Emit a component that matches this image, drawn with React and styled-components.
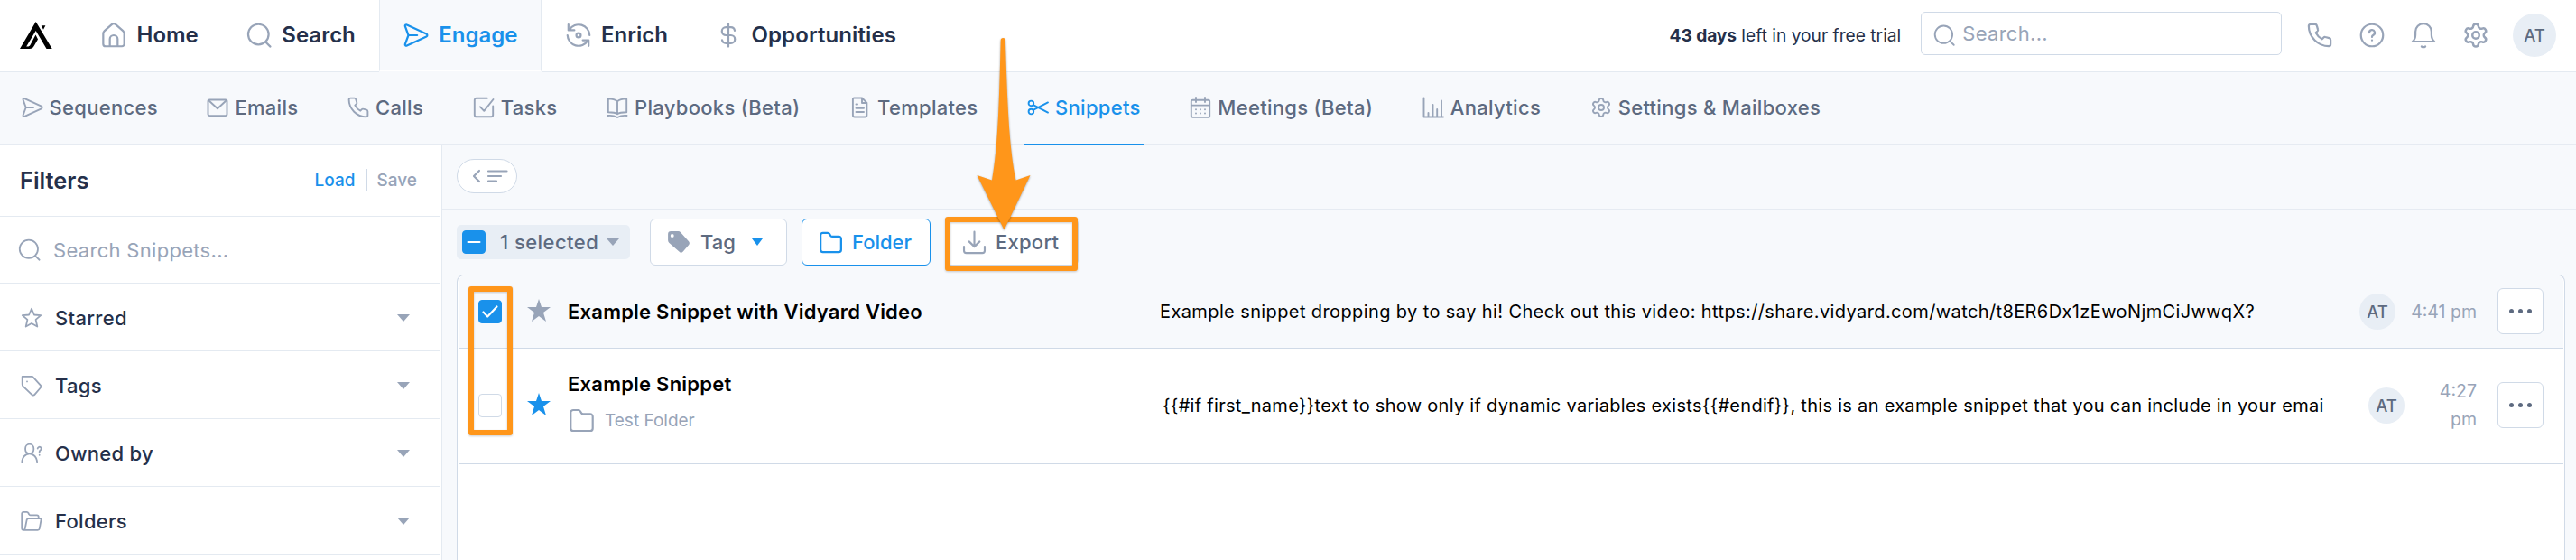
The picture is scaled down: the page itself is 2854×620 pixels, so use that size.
import React from "react";
import styled, { createGlobalStyle } from "styled-components";
import { Settings } from "lucide-react";

const GlobalStyle = createGlobalStyle`
    * {
        box-sizing: border-box;
    }

    body {
        margin: 0;
        background: #f7f9fc;
        font-family: Inter, "Liberation Sans", sans-serif;
        color: #25304a;
    }

    button {
        font-family: inherit;
    }
`

const blue = "#1991eb"
const grey = "#98a4b8"
const slate = "#5d6a80"

const Page = styled.div`
    position: relative;
    width: 100%;
    height: 620px;
    overflow: hidden;
    display: flex;
    flex-direction: column;
`

const IconSvg = styled.svg`
    flex: none;
    display: block;
    fill: none;
    stroke: currentColor;
    stroke-width: ${(p) => p.$stroke || 1.9};
    stroke-linecap: round;
    stroke-linejoin: round;
    overflow: visible;
`

const shapes = {
    home: <path d="M2 10.4c0-.9.4-1.7 1-2.3l7.1-6.3c1.1-.9 2.7-.9 3.8 0L21 8.1c.6.6 1 1.4 1 2.3v9.9a2.2 2.2 0 0 1-2.2 2.2H4.2A2.2 2.2 0 0 1 2 20.3zM8.3 22.5v-6.8a3.7 3.7 0 0 1 7.4 0v6.8" />,
    search: <><circle cx="11.4" cy="11.2" r="9.7" /><path d="m18.4 18.6 4.3 4.2" /></>,
    send: <path d="M3.3 2.1c-1-.5-2.1.4-1.7 1.5L4.7 12l-3.1 8.4c-.4 1.1.7 2 1.7 1.5l18.5-8.6c1.1-.5 1.1-2.1 0-2.6zM4.7 12h8.3" />,
    enrich: <><path d="M2.4 1.9v5.3H8M3.3 6.8A10.4 10.4 0 0 1 22.5 12M21.6 22.1v-5.3H16M20.7 17.2A10.4 10.4 0 0 1 1.5 12" /><circle cx="12" cy="12" r="2.1" /></>,
    dollar: <path d="M12 1.2v21.6M18 7.6a3.7 3.7 0 0 0-3.7-3.2H9.6a3.8 3.8 0 0 0 0 7.6h4.8a3.8 3.8 0 0 1 0 7.6H9.6A3.7 3.7 0 0 1 6 16.6" />,
    mail: <><rect x="1.5" y="3.5" width="21" height="17.6" rx="1.8" /><path d="m2.3 4.3 9.7 9 9.7-9" /></>,
    phone: <path d="M1.6 3.3c0-1 .8-1.7 1.8-1.7h4.2c.8 0 1.5.5 1.7 1.3l1 3.6c.2.6 0 1.2-.4 1.6L8.3 9.6c1.3 2.5 3.4 4.7 6 6.1l1.5-1.6c.4-.4 1-.6 1.6-.4l3.7 1c.8.2 1.3.9 1.3 1.7v4.2c0 1-.8 1.8-1.8 1.8C10.4 22.4 1.6 13.6 1.6 3.3z" />,
    tasks: <path d="M22.2 10.5v9.8a2 2 0 0 1-2 2H3.8a2 2 0 0 1-2-2V3.8a2 2 0 0 1 2-2h12M8 11.3l4.3 4.5L22.5 3" />,
    book: <path d="M12 5.2C9.8 3.2 6.5 2.4 1.8 2.4v14.8c4.5 0 8 .3 10.2 2.1 2.2-1.8 5.7-2.1 10.2-2.1V2.4C17.5 2.4 14.2 3.2 12 5.2zv13.5M1.5 21c4-.5 7.5.3 10.5 2 3-1.7 6.5-2.5 10.5-2" />,
    doc: <path d="M5.2 1.5h8.9l5.3 5.4v13.6a2 2 0 0 1-2 2H5.9a2 2 0 0 1-2-2V2.8c0-.8.5-1.3 1.3-1.3zM14 2v5h5M7.5 8.5H9M7.5 12.7h8.5M7.5 17h8.5" />,
    snip: <><circle cx="4.4" cy="7.4" r="2.8" /><circle cx="4.4" cy="16.6" r="2.8" /><path d="M6.7 9.1 23 17.6M6.7 14.9 23 6.4" /></>,
    calendar: <path d="M3.5 3.7h17A1.7 1.7 0 0 1 22.2 5.4v15.8a1.7 1.7 0 0 1-1.7 1.7h-17a1.7 1.7 0 0 1-1.7-1.7V5.4a1.7 1.7 0 0 1 1.7-1.7zM1.8 9.6h20.4M7 1v5M17 1v5M7 14.2h.01M12 14.2h.01M17 14.2h.01M7 18.5h.01M12 18.5h.01M17 18.5h.01" />,
    chart: <path d="M1.5 1.5v21h21.5M6.5 22v-4M11.5 22V9M16.2 22v-8M21 22V4.5" />,
    help: <><circle cx="12" cy="12" r="10.5" /><path d="M9.4 9.6a2.6 2.6 0 1 1 3.9 2.2c-.8.5-1.3.9-1.3 1.7v.2M12 16.8v.1" /></>,
    bell: <path d="M1.6 18h20.8c-1.9-1.5-2.8-3.4-2.8-6.7V8.6a7.6 7.6 0 0 0-15.2 0v2.7c0 3.3-.9 5.2-2.8 6.7zM10.2 22.7q1.8 1.3 3.6 0" />,
    star: <path d="m12 1.8 2.9 6.7 7.3.6-5.6 4.8 1.7 7.6-6.3-3.5-6.3 3.5 1.7-7.6L1.8 9.1l7.3-.6z" />,
    tag: <><path d="M1.7 1.9H12c.8 0 1.5.3 2 .9l7.7 8.5c.8.9.8 2.3 0 3.2l-6.3 7.3c-.9 1-2.3 1-3.2.1L2.5 12.6a3 3 0 0 1-.8-2z" /><path d="M7 7.4h.01" /></>,
    owner: <path d="M9.7 12.3a4.6 4.6 0 0 0 4.6-4.7V6.3a4.6 4.6 0 0 0-9.2 0v1.3a4.6 4.6 0 0 0 4.6 4.7zM1.3 22.2c0-5.5 3.7-9.9 8.4-9.9s8.4 4.4 8.4 9.9M18.7 6.5a2 2 0 1 1 3 2c-.7.5-1 .9-1 1.6v.6M20.7 13.7v.1" />,
    folder: <path d="M1.9 4.8a2.3 2.3 0 0 1 2.3-2.3h4.6c.9 0 1.6.5 2 1.2l.7 1.3c.3.7 1 1.1 1.8 1.1h6.5a2.3 2.3 0 0 1 2.3 2.3v10.8a2.3 2.3 0 0 1-2.3 2.3H4.2a2.3 2.3 0 0 1-2.3-2.3z" />,
    folderOpen: <path d="M4 21.8h14.8c1 0 1.8-.7 2-1.7l1.7-9.4c.1-.8-.5-1.5-1.3-1.5H8.6c-1 0-1.8.7-2 1.6L4.8 20c-.3 1.1-.9 1.8-1.7 1.8A1.9 1.9 0 0 1 1.2 20V3.8c0-1.1.8-1.9 1.9-1.9h3.5c.8 0 1.5.4 1.8 1.1l.7 1.4c.3.6.8.9 1.5.9h7.3c1 0 1.8.8 1.8 1.8v2.1" />,
    download: <path d="M1.8 16v4a2.3 2.3 0 0 0 2.3 2.3h15.8a2.3 2.3 0 0 0 2.3-2.3v-4M12 1.5v14.2M6.8 11l5.2 5.1 5.2-5.1" />,
}

const Icon = ({ name, size, stroke }) => (
    <IconSvg viewBox="0 0 24 24" width={size} height={size} $stroke={stroke}>
        {shapes[name]}
    </IconSvg>
)

/* ---------- top bar ---------- */

const TopBar = styled.header`
    flex: none;
    height: 80px;
    display: flex;
    align-items: center;
    background: #fff;
    border-bottom: 1px solid #e4eaf1;
    padding: 0 22px 1px;
`

const Logo = styled.svg`
    flex: none;
    width: 36px;
    height: 30px;
    margin-right: 27px;
`

const NavItem = styled.a`
    align-self: flex-start;
    height: 79px;
    display: flex;
    align-items: center;
    gap: 11.5px;
    padding: 0 25px 0 26px;
    border: 1px solid transparent;
    border-width: 0 1px 1px;
    font-size: 24px;
    font-weight: 600;
    line-height: 28px;
    letter-spacing: ${(p) => p.$spacing || "0"};

    svg {
        color: ${grey};
    }

    ${(p) => p.$active && `
        background: #f7f9fc;
        border-color: #e4eaf1;
        border-bottom-color: #fff;
        box-shadow: 0 1px 0 #f7f9fc;
        color: ${blue};
        svg { color: ${blue}; }
    `}
`

const Trial = styled.div`
    margin-left: auto;
    margin-right: 22px;
    font-size: 19.2px;
    white-space: pre;
    b {
        font-weight: 700;
        letter-spacing: -0.1px;
    }
`

const GlobalSearch = styled.div`
    align-self: flex-start;
    margin-top: 13px;
    width: 400px;
    height: 48px;
    border: 1px solid #d0dae7;
    border-radius: 5px;
    display: flex;
    align-items: center;
    gap: 8px;
    padding-left: 13px;
    color: ${grey};
    font-size: 22px;
    letter-spacing: 0.3px;

    svg {
        margin-top: 4px;
    }
`

const HeaderIcons = styled.div`
    display: flex;
    align-items: center;
    gap: 29.6px;
    margin: 0 26px 0 28px;
    color: ${grey};

    svg:last-child {
        margin-left: -1px;
    }
`

const Avatar = styled.div`
    flex: none;
    width: ${(p) => p.$size}px;
    height: ${(p) => p.$size}px;
    border-radius: 50%;
    background: #e8eef5;
    color: ${slate};
    display: flex;
    align-items: center;
    justify-content: center;
    font-size: 18.5px;
    font-weight: 500;
`

/* ---------- second bar ---------- */

const SubNav = styled.nav`
    flex: none;
    height: 80px;
    display: flex;
    gap: 46.6px;
    padding-left: 19.5px;
    border-bottom: 1px solid #e6ebf2;
`

const SubItem = styled.a`
    height: 80px;
    display: flex;
    align-items: center;
    gap: 7px;
    padding: 0 4px 1px;
    border-bottom: 1px solid ${(p) => (p.$active ? blue : "transparent")};
    color: ${(p) => (p.$active ? blue : slate)};
    font-size: 22px;
    font-weight: 500;
    letter-spacing: 0.3px;
    white-space: nowrap;

    svg {
        color: ${(p) => (p.$active ? blue : grey)};
    }
`

/* ---------- sidebar ---------- */

const Body = styled.div`
    flex: 1;
    display: flex;
    min-height: 0;
`

const Sidebar = styled.aside`
    flex: none;
    width: 490px;
    background: #fff;
    border-right: 1px solid #e4eaf1;
    padding-right: 1px;
`

const SideRow = styled.div`
    height: 75px;
    display: flex;
    align-items: center;
    border-bottom: 1px solid #e4eaf1;
    padding: 1px 34px 0 23px;
    font-size: 22px;
    font-weight: 500;
    letter-spacing: 0.3px;

    svg {
        color: ${grey};
        margin-right: 14px;
    }
`

const SideHeader = styled(SideRow)`
    height: 80px;
    padding: 0 26px 0 22px;
`

const SideSearch = styled(SideRow)`
    height: 74px;
    padding: 0 0 0 20px;
    font-weight: 400;
    color: ${grey};
`

const FiltersTitle = styled.h2`
    flex: 1;
    margin: 0;
    font-size: 25.4px;
    font-weight: 600;
    letter-spacing: 0;
`

const TextLink = styled.a`
    font-size: 19px;
    letter-spacing: 0;
    color: ${(p) => (p.$muted ? grey : blue)};
`

const LinkDivider = styled.i`
    width: 1px;
    height: 25px;
    background: #d0dae7;
    margin: 0 11px 0 12px;
`

const Caret = styled.i`
    flex: none;
    border: solid transparent;
    border-width: 8px ${(p) => p.$w || 7}px 0;
    border-top-color: ${(p) => p.$color || grey};
    margin-left: ${(p) => p.$left || "auto"};
`

/* ---------- main ---------- */

const Main = styled.main`
    flex: 1;
    min-width: 0;
    display: flex;
    flex-direction: column;
`

const CollapseBar = styled.div`
    flex: none;
    height: 72px;
    padding: 16px 0 0 16px;
    border-bottom: 1px solid #e6ebf2;
`

const CollapseButton = styled.button`
    width: 67px;
    height: 38px;
    border: 1px solid #d0dae7;
    border-radius: 19px;
    background: #fff;
    color: ${grey};
    padding: 0 0 0 7px;
    display: flex;
    align-items: center;
    justify-content: center;
`

const Toolbar = styled.div`
    flex: none;
    height: 72px;
    display: flex;
    align-items: center;
    gap: 16px;
    padding-left: 16px;
`

const SelectChip = styled.div`
    width: 192px;
    height: 38px;
    margin-right: 6px;
    padding-left: 6px;
    border-radius: 5px;
    background: #e8eef5;
    color: ${slate};
    display: flex;
    align-items: center;
    font-size: 22px;
    font-weight: 500;
    letter-spacing: 0.45px;
    white-space: nowrap;
`

const ChipLabel = styled.span`
    margin-left: 16px;
`

const Button = styled.button`
    width: ${(p) => p.$width}px;
    height: 52px;
    border: 1px solid ${(p) => (p.$primary ? blue : "#d0dae7")};
    border-radius: 6px;
    background: #fff;
    color: ${(p) => (p.$primary ? blue : slate)};
    padding: 0 0 0 18px;
    display: flex;
    align-items: center;
    gap: ${(p) => p.$gap}px;
    font-size: 22px;
    font-weight: 500;
    letter-spacing: ${(p) => p.$spacing || "0"};

    svg {
        color: ${(p) => (p.$primary ? blue : grey)};
    }
`

const Box = styled.span`
    flex: none;
    width: 26px;
    height: 26px;
    border-radius: 4px;
    border: 1px solid ${(p) => (p.$on ? blue : "#d0dae7")};
    background: ${(p) => (p.$on ? blue : "#fff")};
    color: #fff;
    display: flex;
    align-items: center;
    justify-content: center;
`

const Table = styled.div`
    flex: 1;
    margin: 0 12px 0 16px;
    padding: 0 1px;
    background: #fff;
    border: 1px solid #d0dae7;
    border-bottom: 0;
    border-radius: 8px 8px 0 0;
`

const Row = styled.div`
    height: ${(p) => p.$height}px;
    display: flex;
    align-items: center;
    padding: 0 22px ${(p) => (p.$selected ? 0 : 1)}px;
    background: ${(p) => (p.$selected ? "#f7f9fc" : "#fff")};
    border-bottom: 1px solid #d0dae7;
    border-radius: ${(p) => (p.$selected ? "7px 7px 0 0" : "0")};
`

const StarMark = styled.svg`
    flex: none;
    width: 26px;
    height: 25px;
    margin: -3px 19px 0 28px;
    fill: ${(p) => (p.$on ? blue : grey)};
`

const NameCell = styled.div`
    flex: none;
    width: 656px;
    color: #000;
    font-size: 22px;
    font-weight: 600;
    letter-spacing: 0.23px;
`

const FolderLine = styled.div`
    display: flex;
    align-items: center;
    gap: 11px;
    margin: 13px 0 6px 1px;
    color: ${grey};
    font-size: 19px;
    font-weight: 400;
    letter-spacing: 0;
`

const Snippet = styled.div`
    flex: 1;
    min-width: 0;
    padding-left: ${(p) => p.$indent || 0}px;
    overflow: hidden;
    white-space: nowrap;
    color: #000;
    font-size: 20px;
    letter-spacing: ${(p) => p.$spacing};
`

const Time = styled.div`
    width: ${(p) => p.$width}px;
    margin: 0 23px 0 16px;
    color: ${grey};
    font-size: 19.5px;
    line-height: 31px;
    text-align: right;
`

const MoreButton = styled.button`
    width: 51px;
    height: 51px;
    border: 1px solid #d0dae7;
    border-radius: 6px;
    background: #fff;
    padding: 0;
    margin-top: -1px;
    display: flex;
    align-items: center;
    justify-content: center;
    gap: 5px;

    i {
        width: 5px;
        height: 5px;
        border-radius: 50%;
        background: ${slate};
    }
`

/* orange callouts drawn over the page */

const Callout = styled.div`
    position: absolute;
    left: ${(p) => p.$x}px;
    top: ${(p) => p.$y}px;
    width: ${(p) => p.$w}px;
    height: ${(p) => p.$h}px;
    border: 6px solid #ff961a;
    border-radius: 3px;
    filter: drop-shadow(0 1px 1px rgba(0, 0, 0, 0.2));
`

const Arrow = styled.svg`
    position: absolute;
    left: 1080px;
    top: 40px;
    width: 64px;
    height: 216px;
    fill: #ff961a;
    filter: drop-shadow(0 1px 1px rgba(0, 0, 0, 0.35));
`

const mainNav = [
    { icon: "home", label: "Home" },
    { icon: "search", label: "Search" },
    { icon: "send", label: "Engage", active: true },
    { icon: "enrich", label: "Enrich" },
    { icon: "dollar", label: "Opportunities", spacing: "0.1px" },
]

const subNav = [
    { icon: "send", label: "Sequences" },
    { icon: "mail", label: "Emails" },
    { icon: "phone", label: "Calls" },
    { icon: "tasks", label: "Tasks" },
    { icon: "book", label: "Playbooks (Beta)" },
    { icon: "doc", label: "Templates" },
    { icon: "snip", label: "Snippets", active: true },
    { icon: "calendar", label: "Meetings (Beta)" },
    { icon: "chart", label: "Analytics" },
    { icon: "settings", label: "Settings & Mailboxes" },
]

const filters = [
    { icon: "star", label: "Starred" },
    { icon: "tag", label: "Tags" },
    { icon: "owner", label: "Owned by" },
    { icon: "folderOpen", label: "Folders" },
]

const More = () => (
    <MoreButton>
        <i /><i /><i />
    </MoreButton>
)

const Star = ({ on }) => (
    <StarMark viewBox="0 0 26 25" $on={on}>
        <path d="M13 0 16 9H26L18 15 21 25 13 19 5 25 8 15 0 9H10z" />
    </StarMark>
)

const Header = () => (
    <TopBar>
        <Logo viewBox="0 0 36 30">
            <path d="M17.7 0 35.7 30h-6.2L17.7 10 7.2 27.4h1.2c1.6 0 2.5-.6 3.3-2l5.8-11 2.5 5-4.2 7.4c-1.3 2.3-2.6 3.2-5 3.2H0zM23.7 4.3h4.7L26 8.8z" />
        </Logo>
        {mainNav.map((n) => (
            <NavItem key={n.label} $active={n.active} $spacing={n.spacing}>
                <Icon name={n.icon} size={28} />
                {n.label}
            </NavItem>
        ))}
        <Trial><b>43 days</b> left in your free trial</Trial>
        <GlobalSearch>
            <Icon name="search" size={24} />
            Search...
        </GlobalSearch>
        <HeaderIcons>
            <Icon name="phone" size={28} />
            <Icon name="help" size={28} />
            <Icon name="bell" size={28} />
            <Settings size={30} strokeWidth={2} />
        </HeaderIcons>
        <Avatar $size={48}>AT</Avatar>
    </TopBar>
)

const Filters = () => (
    <Sidebar>
        <SideHeader>
            <FiltersTitle>Filters</FiltersTitle>
            <TextLink>Load</TextLink>
            <LinkDivider />
            <TextLink $muted>Save</TextLink>
        </SideHeader>
        <SideSearch>
            <Icon name="search" size={25} stroke={1.7} />
            Search Snippets...
        </SideSearch>
        {filters.map((f) => (
            <SideRow key={f.label}>
                <Icon name={f.icon} size={24} stroke={1.8} />
                {f.label}
                <Caret />
            </SideRow>
        ))}
    </Sidebar>
)

const App = () => {
    return (
        <Page>
            <GlobalStyle />
            <Header />
            <SubNav>
                {subNav.map((n) => (
                    <SubItem key={n.label} $active={n.active}>
                        {n.icon === "settings" ? <Settings size={24} strokeWidth={1.9} /> : <Icon name={n.icon} size={24} />}
                        {n.label}
                    </SubItem>
                ))}
            </SubNav>
            <Body>
                <Filters />
                <Main>
                    <CollapseBar>
                        <CollapseButton>
                            <IconSvg viewBox="0 0 38 14" width="38" height="14" $stroke={2.2}>
                                <path d="M7 1 1 7l6 6M17 1.5h20.5M17 7h14M17 12.5h9" />
                            </IconSvg>
                        </CollapseButton>
                    </CollapseBar>
                    <Toolbar>
                        <SelectChip>
                            <Box $on>
                                <IconSvg viewBox="0 0 16 4" width="16" height="4" $stroke={2}>
                                    <path d="M1.5 2h13" />
                                </IconSvg>
                            </Box>
                            <ChipLabel>1 selected</ChipLabel>
                            <Caret $left="9px" />
                        </SelectChip>
                        <Button $width={152} $gap={11}>
                            <svg width="26" height="26" viewBox="0 0 24 24" fill="currentColor">
                                <path fillRule="evenodd" d="M4 1h7.5c1 0 1.8.4 2.4 1l8.3 9.2c1 1.2 1 2.5 0 3.7l-6 7c-1 1.2-2.5 1.2-3.6.1L2 12.7A4 4 0 0 1 1 10.2V4a3 3 0 0 1 3-3zm1.3 2.7a1.8 1.8 0 1 0 0 3.6 1.8 1.8 0 0 0 0-3.6z" />
                            </svg>
                            Tag
                            <Caret $left="7px" $w={6.5} $color={blue} />
                        </Button>
                        <Button $primary $width={143} $gap={10}>
                            <Icon name="folder" size={27} stroke={2} />
                            Folder
                        </Button>
                        <Button $width={148} $gap={10} $spacing="0.25px">
                            <Icon name="download" size={27} stroke={1.9} />
                            Export
                        </Button>
                    </Toolbar>
                    <Table>
                        <Row $height={81} $selected>
                            <Box $on>
                                <IconSvg viewBox="0 0 18 14" width="18" height="14" $stroke={2.2}>
                                    <path d="m1.5 7.5 4.7 5L16.5 1.5" />
                                </IconSvg>
                            </Box>
                            <Star />
                            <NameCell>Example Snippet with Vidyard Video</NameCell>
                            <Snippet $spacing="0.39px">
                                Example snippet dropping by to say hi! Check out this video: https://share.vidyard.com/watch/t8ER6Dx1zEwoNjmCiJwwqX?
                            </Snippet>
                            <Avatar $size={40}>AT</Avatar>
                            <Time $width={74}>4:41 pm</Time>
                            <More />
                        </Row>
                        <Row $height={128}>
                            <Box />
                            <Star on />
                            <NameCell>
                                Example Snippet
                                <FolderLine>
                                    <Icon name="folder" size={29} stroke={1.8} />
                                    Test Folder
                                </FolderLine>
                            </NameCell>
                            <Snippet $indent={3} $spacing="0.29px">
                                {"{{#if first_name}}text to show only if dynamic variables exists{{#endif}}, this is an example snippet that you can include in your emai"}
                            </Snippet>
                            <Avatar $size={40}>AT</Avatar>
                            <Time $width={64}>4:27 pm</Time>
                            <More />
                        </Row>
                    </Table>
                </Main>
            </Body>
            <Callout $x={1047} $y={240} $w={147} $h={60} />
            <Callout $x={519} $y={317} $w={49} $h={165} />
            <Arrow viewBox="0 0 64 216">
                <path d="M28.7 4.5a2.6 2.6 0 0 1 5.2 0C36 70 37.5 120 45.5 159.5L61.5 154 32.5 214.5 2.500 154 19 159.5C26 120 27 70 28.700 4.500z" />
            </Arrow>
        </Page>
    )
}

export default App
